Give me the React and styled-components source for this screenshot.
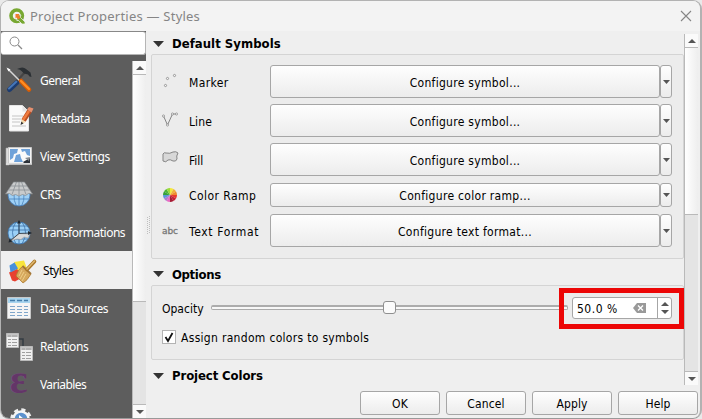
import React from 'react';
import styled, { createGlobalStyle, css } from 'styled-components';

const GlobalStyle = createGlobalStyle`
  * { box-sizing: border-box; }
  body { margin: 0; background: #e9e9e9; overflow: hidden; }
  svg { display: block; flex: none; }
`;

const ui = '"DejaVu Sans Condensed", "DejaVu Sans", sans-serif';
const side = '"Noto Sans", "Open Sans", sans-serif';

const Window = styled.div`
  width: 702px;
  height: 419px;
  display: flex;
  flex-direction: column;
  background: #efefef;
  border: 1px solid #b2b2b2;
  border-right-width: 2px;
  border-bottom-color: #999;
  border-radius: 9px;
  overflow: hidden;
  font-family: ${ui};
  font-size: 12px;
  font-stretch: condensed;
  color: #000;
`;

const TitleBar = styled.header`
  height: 30px;
  flex: none;
  display: flex;
  align-items: center;
  padding: 0 8px 0 8px;
  background: #f3f3f3;
`;

const Title = styled.span`
  flex: 1;
  padding-left: 4px;
  font-family: ${side};
  font-stretch: normal;
  font-size: 13px;
  letter-spacing: 0.22px;
  color: #858585;
`;

const Body = styled.div`
  flex: 1;
  min-height: 0;
  display: flex;
`;

const Sidebar = styled.nav`
  width: 145px;
  flex: none;
  display: flex;
  flex-direction: column;
  background: #5d5d5d;
`;

const Search = styled.div`
  height: 24px;
  flex: none;
  background: #fff;
  border: 1px solid #b5b5b5;
  border-top-color: #888;
  border-left: 0;
  border-radius: 3px;
  padding: 3px 0 0 7px;
`;

const SideBody = styled.div`
  flex: 1;
  min-height: 0;
  margin-top: 6px;
  display: flex;
`;

const NavList = styled.div`
  width: 131px;
  height: 357px;
  overflow: hidden;
`;

const NavItem = styled.div`
  height: 38px;
  display: flex;
  align-items: center;
  white-space: nowrap;
  font-family: ${side};
  font-stretch: normal;
  font-size: 12px;
  letter-spacing: ${p => p.$ls || 0}px;
  color: #fff;
  gap: 1px;
  ${p => p.$active && css`
    background: #f0f0f0;
    color: #000;
    gap: 4px;
  `}
`;

const ScrollBar = styled.div`
  width: 14px;
  flex: none;
  display: flex;
  flex-direction: column;
  background: #e4e4e4;
  border-left: 1px solid #b9b9b9;
`;

const ScrollButton = styled.div`
  height: 14px;
  flex: none;
  display: flex;
  align-items: center;
  justify-content: center;
  background: #fafafa;
  border-bottom: ${p => (p.$down ? 0 : 1)}px solid #b9b9b9;
  border-top: ${p => (p.$down ? 1 : 0)}px solid #b9b9b9;
`;

const Thumb = styled.div`
  height: ${p => p.$h}px;
  background: linear-gradient(90deg, #fff, #eeeeee);
  border-bottom: 1px solid #b9b9b9;
`;

const Grow = styled.div`
  flex: 1;
`;

const Splitter = styled.div`
  width: 5px;
  flex: none;
  display: flex;
  align-items: center;
  padding: 0 0 0 1px;
`;

const Main = styled.main`
  flex: 1;
  min-width: 0;
  display: flex;
  flex-direction: column;
`;

const ScrollArea = styled.div`
  height: 354px;
  display: flex;
`;

const Content = styled.div`
  width: 533px;
  flex: none;
`;

const SectionTitle = styled.div`
  height: ${p => p.$h}px;
  padding: ${p => p.$top || 0}px 0 0 2px;
  display: flex;
  align-items: center;
  gap: 8px;
  font-size: 13px;
  font-weight: bold;
  letter-spacing: ${p => p.$ls}px;
`;

const Group = styled.section`
  height: ${p => p.$h}px;
  background: #ececec;
  border: 1px solid #d4d4d4;
  border-radius: 2px;
  padding: ${p => p.$pad};
`;

const SymbolRow = styled.div`
  height: ${p => p.$h}px;
  margin-bottom: ${p => p.$gap}px;
  display: flex;
  align-items: center;
`;

const SymbolLabel = styled.span`
  width: 82px;
  padding: 2px 0 0 1px;
  white-space: nowrap;
  letter-spacing: ${p => p.$ls || 0}px;
`;

const buttonFace = css`
  display: flex;
  align-items: center;
  justify-content: center;
  background: linear-gradient(#fefefe, #ececec);
  border: 1px solid #a6a6a6;
  border-radius: 3px;
`;

const ConfigButton = styled.div`
  ${buttonFace}
  width: 390px;
  height: 100%;
  padding-top: 2px;
  letter-spacing: 0.3px;
`;

const DropButton = styled.div`
  ${buttonFace}
  width: 12px;
  height: 100%;
`;

const OpacityRow = styled.div`
  height: 22px;
  display: flex;
  align-items: center;
`;

const OpacityLabel = styled.span`
  width: 49px;
  padding-top: 1px;
`;

const Slider = styled.div`
  width: 357px;
  height: 5px;
  margin: -1px 4px 0 0;
  display: flex;
  align-items: center;
  justify-content: center;
  border: 1px solid #aaa;
  border-top: 2px solid #acacac;
  border-radius: 2px;
  background: #f7f7f7;
`;

const Handle = styled.div`
  width: 13px;
  height: 13px;
  flex: none;
  margin-top: -1px;
  background: #fbfbfb;
  border: 1px solid #8f8f8f;
  border-radius: 3px;
`;

const SpinBox = styled.div`
  position: relative;
  width: 100px;
  height: 22px;
  display: flex;
  align-items: center;
  background: #fff;
  border: 1px solid #a6a6a6;
  border-radius: 3px;
`;

const SpinValue = styled.span`
  width: 60px;
  padding: 1px 0 0 4px;
  letter-spacing: 0.5px;
`;

const SpinArrows = styled.div`
  width: 14px;
  height: 20px;
  margin-left: auto;
  border-left: 1px solid #a6a6a6;
  display: flex;
  flex-direction: column;
  align-items: center;
  justify-content: center;
  gap: 4px;
`;

const Highlight = styled.div`
  position: absolute;
  left: -14px;
  top: -10px;
  width: 125px;
  height: 41px;
  border: 5px solid #ec0606;
`;

const CheckRow = styled.div`
  margin-top: 11px;
  height: 14px;
  display: flex;
  align-items: center;
  gap: 5px;
  letter-spacing: 0.31px;
`;

const CheckLabel = styled.span`
  padding-top: 1px;
`;

const CheckBox = styled.div`
  width: 14px;
  height: 14px;
  background: #fff;
  border: 1px solid #b3b3b3;
`;

const Footer = styled.footer`
  display: flex;
  justify-content: flex-end;
  gap: 6px;
  padding: 6px 2px 0 0;
`;

const DialogButton = styled.div`
  ${buttonFace}
  width: 80px;
  height: 24px;
  padding-top: 1px;
  letter-spacing: 0.15px;
`;

const Tri = ({ up, w = 8, h = 4, color = '#555' }) => (
  <svg width={w} height={h} viewBox="0 0 8 4" preserveAspectRatio="none">
    <path d={up ? 'M0 4 4 0 8 4Z' : 'M0 0 4 4 8 0Z'} fill={color} />
  </svg>
);

/* Each sidebar icon is drawn in a 38x38 cell. */
const Cell = ({ children }) => (
  <svg width="38" height="38" viewBox="0 0 38 38">{children}</svg>
);

const ToolsIcon = () => (
  <Cell>
    <path d="M8.500 28.500 16 21.500" stroke="#1d3c70" strokeWidth="5" strokeLinecap="round" />
    <path d="M8 27.500 15.500 20.500" stroke="#4677b8" strokeWidth="2" strokeLinecap="round" />
    <path d="M16 20 25 10" stroke="#454545" strokeWidth="2.200" />
    <path d="M16 8q6-3 9 0l4.500 3.500 1 4.500-2-.5-1.500-2-4-1-2.500-2.500q-1-1.500-4.500-2z" fill="#2b3034" />
    <path d="m7 8 12 12" stroke="#d7d7d7" strokeWidth="1.500" />
    <path d="m5.500 6.500 4 2-2 2z" fill="#fff" />
    <path d="m20 20 8 8.500" stroke="#d45c06" strokeWidth="4.600" strokeLinecap="round" />
    <path d="m20 20 8 8" stroke="#ff8d22" strokeWidth="2.400" strokeLinecap="round" />
  </Cell>
);

const MetadataIcon = () => (
  <Cell>
    <path d="M8.500 6.500h13l6 6v19.500h-19z" fill="#fafafa" stroke="#e6e6e6" />
    <path d="M21.500 6.500v6h6" fill="#e4e4e4" />
    <path d="M11 17h11m-11 3h9m-9 3h8m-8 4h14" stroke="#c4c4c4" strokeWidth="1.200" />
    <path d="m28.500 12-6 9.500" stroke="#b94d20" strokeWidth="5" />
    <path d="m28 12-6 9" stroke="#f07b3d" strokeWidth="2.500" />
    <path d="m20.300 20 4.400 3-4.200 2.500z" fill="#f3d9aa" />
    <path d="m20.400 22.500-.9 3.500 3-1.500z" fill="#333" />
    <path d="m28 8 4.500 1.500-2 4-4.500-3z" fill="#e7906f" />
  </Cell>
);

const MapIcon = () => (
  <Cell>
    <path d="M5 11h3v17H5z" fill="#dedede" stroke="#aaa" strokeWidth=".6" />
    <path d="M7.500 10.500h23v16h-23z" fill="#f3f3f3" stroke="#c9c9c9" />
    <path d="M9 12h20v13H9z" fill="#fafafa" />
    <path d="M9 12h8l-1 4-3 1-1 4-3 2zM20 12h9v7l-3-1-2-4-3 1zM15 18l4-1 1 4 2 4h-9z" fill="#6fa2d9" />
    <path d="m22 25 7-4v5h-6z" fill="#2c3138" />
    <path d="m24 21 5-1-1 4z" fill="#858b90" />
    <path d="M5 27h26" stroke="#dedede" strokeWidth="1.600" />
  </Cell>
);

const CrsIcon = () => (
  <Cell>
    <circle cx="18" cy="20" r="11" fill="#9fd0f5" stroke="#4279b4" strokeWidth=".8" />
    <path d="M8 24h20M18 18v13m-5-12q-.5 7 2.500 12m7.500-12q.5 7-2.500 12" fill="none" stroke="#4a84bd" strokeWidth=".8" />
    <path d="M12.500 7h11l8 12-4-.5-3 2-3-1-3.500 1.500-3.500-1.500-3 1-3-2-4 .5z" fill="#c9cbcc" stroke="#858a8d" strokeWidth=".7" />
    <path d="M10 11h16M7.500 15h21M18 7v13M15.500 7l-4.500 12.500M20.500 7l4.500 12.500" stroke="#8a9095" strokeWidth=".8" />
  </Cell>
);

const TransformIcon = () => (
  <Cell>
    <circle cx="18" cy="20" r="11" fill="#9ad0f7" stroke="#3a72ab" strokeWidth=".8" />
    <path d="M7.500 17h21M9 13h18M9 26h18M18 9v22m-3-22q-7 10 0 22m6-22q7 10 0 22" fill="none" stroke="#3c71a8" strokeWidth=".8" />
    <path d="m9 28 9-7.500 11 .5-2 4-4-1-3 2.500-4-.5z" fill="#d8dadb" stroke="#999" strokeWidth=".6" />
    <path d="M18 9v11.500l11-.5M18 20.500 9 28" fill="none" stroke="#29313a" strokeWidth=".8" />
    <path d="m18 7 2 3.500h-4zM31 20l-4-2v4zM7.500 29.500l1-4 3 3z" fill="#20272e" />
  </Cell>
);

const StylesIcon = () => (
  <Cell>
    <path d="m13 11 10-1.500 3 8-10 3z" fill="#f8e43c" />
    <path d="M8 21.500 16 18l6 8-8 4.500-3-1z" fill="#e74130" />
    <path d="m8.500 14.500 5-3 3.500 6-7.500 4z" fill="#4790dc" />
    <path d="m22 15 8 8q-4 7-8 9l-7-7q2-7 7-10z" fill="#d6a85d" stroke="#a77428" strokeWidth=".7" />
    <path d="m21 19-3 6m5-4-4 7m6-5-4 7" stroke="#f1d28c" strokeWidth=".9" />
    <path d="m21.500 15 8.500 8" stroke="#a37637" strokeWidth="1.800" />
    <path d="m26 18.500 7.500-8" stroke="#a97527" strokeWidth="3.600" strokeLinecap="round" />
    <path d="m26 18 7.500-8" stroke="#deb870" strokeWidth="1.500" strokeLinecap="round" />
  </Cell>
);

const TableIcon = () => (
  <Cell>
    <path d="M6.500 8.500h23v21h-23z" fill="#f5f5f5" stroke="#c8c8c8" />
    <path d="M7 9h22v5H7z" fill="#a8d5ef" />
    <path d="M9 11.500h5m2 0h5m2 0h4" stroke="#447eab" strokeWidth="1.500" />
    <path d="M9 17.500h5m2 0h5m2 0h4M9 20.500h5m2 0h5m2 0h4M9 23.500h5m2 0h5m2 0h4M9 26.500h5m2 0h5m2 0h4" stroke="#7fa6ca" />
  </Cell>
);

const RelationsIcon = () => (
  <Cell>
    <path d="M17 12h5v8" fill="none" stroke="#343c43" strokeWidth="1.500" />
    {[[5, 6], [19, 19]].map(([x, y]) => (
      <g key={x} transform={`translate(${x} ${y})`}>
        <path d="M.5.5h12v14H.5z" fill="#f0f0f0" stroke="#bababa" />
        <path d="M1 1h11v3H1z" fill="#c5c5c5" />
        <path d="M2 3h3m1 0h5M2 6.500h3m1 0h5M2 9.500h3m1 0h5M2 12.500h3m1 0h5" stroke="#959595" strokeWidth=".9" />
      </g>
    ))}
  </Cell>
);

const VariableGlyph = styled.span`
  width: 38px;
  height: 38px;
  padding: 2px 0 0 9px;
  font: bold 41px/25px "Liberation Serif", serif;
  color: #633668;
  text-shadow: -0.5px -0.5px #84558a;
`;

const GearIcon = () => (
  <Cell>
    <circle cx="20" cy="16" r="9" fill="none" stroke="#eee" strokeWidth="3.500" strokeDasharray="4 3.070" />
    <circle cx="20" cy="16" r="7.500" fill="#5c91ce" stroke="#f5f5f5" strokeWidth="2.500" />
    <path d="m18 12 5 4-5 4z" fill="#fff" />
  </Cell>
);

const SmallIcon = ({ children }) => (
  <svg width="26" height="24" viewBox="0 0 26 24">{children}</svg>
);

const MarkerIcon = () => (
  <SmallIcon>
    <g fill="#f5f5f5" stroke="#858585" strokeWidth=".8">
      <circle cx="3.500" cy="15.500" r="1.100" /><circle cx="5.500" cy="8.500" r="1.100" /><circle cx="12.500" cy="5.500" r="1.100" />
    </g>
  </SmallIcon>
);

const LineIcon = () => (
  <SmallIcon>
    <path d="m1.500 7 4 9 5-11h4" fill="none" stroke="#858585" />
    <g fill="#f5f5f5" stroke="#858585" strokeWidth=".7">
      <circle cx="1.500" cy="7" r="1.100" /><circle cx="5.500" cy="16" r="1.100" /><circle cx="10.500" cy="5" r="1.100" /><circle cx="14.500" cy="5" r="1.100" />
    </g>
  </SmallIcon>
);

const FillIcon = () => (
  <SmallIcon>
    <path d="M1 6q1-2 3-1 4 1 7-1 3-1 5 1-2 3-1 6-1 3-4 2-3-2-5-1-2 3-5 1V9z" fill="#d8d8d8" stroke="#858585" />
  </SmallIcon>
);

const rampColors = ['#f3e83e', '#f0b03a', '#ef8b2d', '#e8382e', '#c91f35', '#a51c35', '#e96bc1', '#b07bd0', '#5b96d9', '#35a13a', '#4cb43a', '#9bdc38'];
const RampIcon = () => (
  <SmallIcon>
    {rampColors.map((c, i) => {
      const a = (i / 12) * Math.PI * 2 - Math.PI / 2;
      const b = a + Math.PI / 6;
      return <path key={i} fill={c} d={`M8 12L${8 + 7 * Math.cos(a)} ${12 + 7 * Math.sin(a)}A7 7 0 0 1 ${8 + 7 * Math.cos(b)} ${12 + 7 * Math.sin(b)}Z`} />;
    })}
  </SmallIcon>
);

const AbcIcon = styled.span`
  width: 26px;
  font-family: "DejaVu Sans", sans-serif;
  font-stretch: normal;
  font-size: 9px;
  -webkit-text-stroke: 0.3px #777;
  letter-spacing: -0.1px;
  color: #777;
`;

const navItems = [
  ['General', ToolsIcon, -0.55],
  ['Metadata', MetadataIcon, -0.5],
  ['View Settings', MapIcon, -0.4],
  ['CRS', CrsIcon, -0.3],
  ['Transformations', TransformIcon, -0.52],
  ['Styles', StylesIcon, -0.4],
  ['Data Sources', TableIcon, -0.5],
  ['Relations', RelationsIcon, -0.4],
  ['Variables', () => <VariableGlyph>ε</VariableGlyph>, -0.6],
  ['', GearIcon, 0],
];

const symbolRows = [
  ['Marker', MarkerIcon, 'Configure symbol...', 33, 6, 0.4],
  ['Line', LineIcon, 'Configure symbol...', 33, 6, 0.1],
  ['Fill', FillIcon, 'Configure symbol...', 33, 7, 0],
  ['Color Ramp', RampIcon, 'Configure color ramp...', 24, 7, 0.45],
  ['Text Format', () => <AbcIcon>abc</AbcIcon>, 'Configure text format...', 33, 0, 0.65],
];

const MainScroll = styled(ScrollBar)`
  height: 351px;
  margin-top: 3px;
`;

export default function App() {
  return (
    <>
      <GlobalStyle />
      <Window>
        <TitleBar>
          <svg width="17" height="17" viewBox="0 0 17 17">
            <circle cx="7.700" cy="7.700" r="5.700" fill="none" stroke="#78a832" strokeWidth="3.600" />
            <path d="M8 7h4l-1 2 5 5v2h-3l-4-4-1 1z" fill="#78a832" stroke="#f3f3f3" strokeWidth=".7" />
            <path d="M6.500 6h4l-1 1.500 2 2-2 2-2-2-1 1z" fill="#ef7d2b" />
          </svg>
          <Title>Project Properties — Styles</Title>
          <svg width="12" height="12" viewBox="0 0 12 12"><path d="m1 1 10 10M11 1 1 11" stroke="#858585" strokeWidth="1.100" /></svg>
        </TitleBar>
        <Body>
          <Sidebar>
            <Search>
              <svg width="16" height="16" viewBox="0 0 16 16"><circle cx="6.500" cy="6.500" r="4.500" fill="none" stroke="#888" /><path d="m10 10 4 4" stroke="#888" strokeWidth="1.300" /></svg>
            </Search>
            <SideBody>
              <NavList>
                {navItems.map(([label, Icon, ls]) => (
                  <NavItem key={label} $active={label === 'Styles'} $ls={ls}><Icon />{label}</NavItem>
                ))}
              </NavList>
              <ScrollBar>
                <ScrollButton><Tri up /></ScrollButton>
                <Thumb $h={227} />
                <Grow />
                <ScrollButton $down><Tri /></ScrollButton>
              </ScrollBar>
            </SideBody>
          </Sidebar>
          <Splitter>
            <svg width="3" height="18" viewBox="0 0 3 18"><path d="M.5 1v17M2.500 0v17" stroke="#aaa" strokeDasharray="1 1" strokeWidth=".7" /></svg>
          </Splitter>
          <Main>
            <ScrollArea>
              <Content>
                <SectionTitle $h={23} $top={2} $ls={0.03}><Tri w={11} h={6} color="#333" />Default Symbols</SectionTitle>
                <Group $h={205} $pad="10px 0 0 10px">
                  {symbolRows.map(([label, Icon, text, h, gap, ls]) => (
                    <SymbolRow key={label} $h={h} $gap={gap}>
                      <Icon />
                      <SymbolLabel $ls={ls}>{label}</SymbolLabel>
                      <ConfigButton>{text}</ConfigButton>
                      <DropButton><Tri w={7} /></DropButton>
                    </SymbolRow>
                  ))}
                </Group>
                <SectionTitle $h={26} $top={4} $ls={-0.35}><Tri w={11} h={6} color="#333" />Options</SectionTitle>
                <Group $h={75} $pad="11px 0 0 10px">
                  <OpacityRow>
                    <OpacityLabel>Opacity</OpacityLabel>
                    <Slider><Handle /></Slider>
                    <SpinBox>
                      <SpinValue>50.0 %</SpinValue>
                      <svg width="13" height="10" viewBox="0 0 13 10"><path d="m0 5 4-5h9v10H4z" fill="#999" /><path d="m5 2.500 5 5m0-5-5 5" stroke="#fff" strokeWidth="1.300" /></svg>
                      <SpinArrows><Tri up /><Tri /></SpinArrows>
                      <Highlight />
                    </SpinBox>
                  </OpacityRow>
                  <CheckRow>
                    <CheckBox><svg width="12" height="12" viewBox="0 0 12 12"><path d="m2.500 6 2.500 4 4.500-8" fill="none" stroke="#111" strokeWidth="1.800" /></svg></CheckBox>
                    <CheckLabel>Assign random colors to symbols</CheckLabel>
                  </CheckRow>
                </Group>
                <SectionTitle $h={26} $top={5} $ls={-0.1}><Tri w={11} h={6} color="#333" />Project Colors</SectionTitle>
              </Content>
              <MainScroll>
                <ScrollButton><Tri up /></ScrollButton>
                <Thumb $h={167} />
                <Grow />
                <ScrollButton $down><Tri /></ScrollButton>
              </MainScroll>
            </ScrollArea>
            <Footer>
              {['OK', 'Cancel', 'Apply', 'Help'].map(t => <DialogButton key={t}>{t}</DialogButton>)}
            </Footer>
          </Main>
        </Body>
      </Window>
    </>
  );
}
